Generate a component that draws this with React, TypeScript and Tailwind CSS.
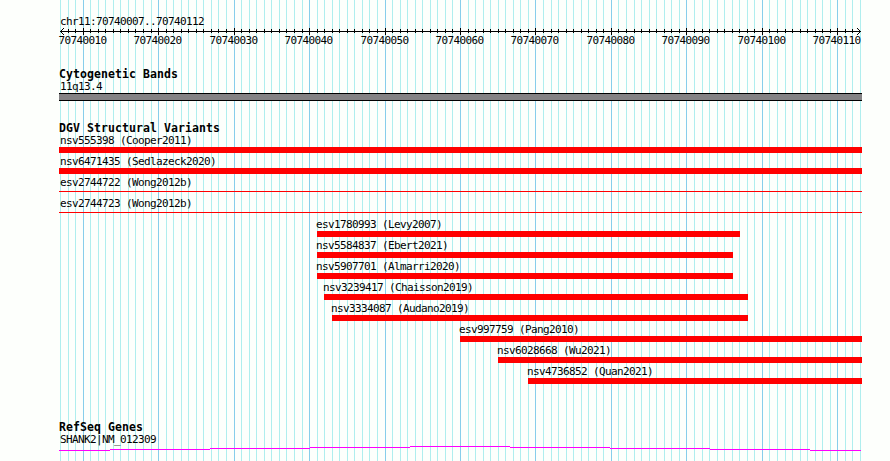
const START = 7;
const END = 113;
const ORIGIN = 60;
const SCALE = 800 / (END - START);

const toX = (pos: number) => Math.round(ORIGIN + (pos - START) * SCALE);

const positions = Array.from({ length: END - START + 1 }, (_, i) => START + i);

const variants = [
  { label: "nsv555398 (Cooper2011)", left: 59, right: 862, thin: false },
  { label: "nsv6471435 (Sedlazeck2020)", left: 59, right: 862, thin: false },
  { label: "esv2744722 (Wong2012b)", left: 59, right: 862, thin: true },
  { label: "esv2744723 (Wong2012b)", left: 59, right: 862, thin: true },
  { label: "esv1780993 (Levy2007)", left: 317, right: 740, thin: false },
  { label: "nsv5584837 (Ebert2021)", left: 317, right: 733, thin: false },
  { label: "nsv5907701 (Almarri2020)", left: 317, right: 733, thin: false },
  { label: "nsv3239417 (Chaisson2019)", left: 324, right: 748, thin: false },
  { label: "nsv3334087 (Audano2019)", left: 332, right: 748, thin: false },
  { label: "esv997759 (Pang2010)", left: 460, right: 862, thin: false },
  { label: "nsv6028668 (Wu2021)", left: 498, right: 862, thin: false },
  { label: "nsv4736852 (Quan2021)", left: 528, right: 862, thin: false },
];

// left edge, right edge, height of each step of the gene line
const geneSteps = [
  [59, 110, 4],
  [110, 210, 3],
  [210, 310, 2],
  [310, 410, 1],
  [410, 510, 0],
  [510, 610, 1],
  [610, 710, 2],
  [710, 810, 3],
  [810, 861, 4],
];

function Grid() {
  return (
    <svg className="absolute inset-0 -z-10" width="890" height="461" shapeRendering="crispEdges">
      {positions.map((p) => (
        <rect
          key={p}
          x={toX(p)}
          y={0}
          width={1}
          height={461}
          fill={p % 10 === 0 ? "#87ceeb" : "#afeeee"}
        />
      ))}
    </svg>
  );
}

function Ruler() {
  return (
    <svg className="block" width="890" height="22">
      <g shapeRendering="crispEdges">
        <rect x={60} y={4} width={801} height={1} />
        {positions.slice(1, -1).map((p) => {
          const major = p % 10 === 0;
          return (
            <rect key={p} x={toX(p)} y={major ? 1 : 2} width={1} height={major ? 7 : 4} />
          );
        })}
        {[1, 2, 3].map((d) => (
          <g key={d}>
            <rect x={60 + d} y={4 - d} width={1} height={1} />
            <rect x={60 + d} y={4 + d} width={1} height={1} />
            <rect x={860 - d} y={4 - d} width={1} height={1} />
            <rect x={860 - d} y={4 + d} width={1} height={1} />
          </g>
        ))}
      </g>
      {positions
        .filter((p) => p % 10 === 0)
        .map((p) => (
          <text key={p} x={toX(p) - 24.5} y={17}>
            {70740000 + p}
          </text>
        ))}
    </svg>
  );
}

function Heading({ children }: { children: string }) {
  return (
    <h2 className="ml-[59px] h-3 text-[11.5px] leading-3 font-bold tracking-[0.077px]">
      {children}
    </h2>
  );
}

export default function App() {
  return (
    <main className="relative isolate h-[461px] w-[890px] overflow-hidden bg-[#fdfffc] pt-4 font-['DejaVu_Sans_Mono',monospace] text-[11px] leading-3 tracking-[-0.622px] whitespace-nowrap text-black">
      <Grid />
      <div className="ml-[60px] h-[11px]">chr11:70740007..70740112</div>
      <Ruler />

      <section className="mt-[19px]">
        <Heading>Cytogenetic Bands</Heading>
        <div className="ml-[60px] h-[13px] pt-px">11q13.4</div>
        <div className="ml-[59px] h-2 w-[803px] border-y border-black bg-[#848284]" />
      </section>

      <section className="mt-[21px]">
        <Heading>DGV Structural Variants</Heading>
        {variants.map((v) => (
          <div
            key={v.label}
            className="h-[21px]"
            style={{ marginLeft: v.left, width: v.right - v.left }}
          >
            <div className={v.left === 59 ? "ml-px h-[13px] pt-px" : "-ml-px h-[13px] pt-px"}>
              {v.label}
            </div>
            <div className={v.thin ? "mt-0.5 h-px bg-[#ff0000]" : "h-1.5 bg-[#ff0000]"} />
          </div>
        ))}
      </section>

      <section className="mt-[35px]">
        <Heading>RefSeq Genes</Heading>
        <div className="ml-[60px] h-[13px] pt-px">SHANK2|NM_012309</div>
        <svg className="block" width="890" height="5" shapeRendering="crispEdges">
          {geneSteps.map(([x1, x2, y]) => (
            <rect key={x1} x={x1} y={y} width={x2 - x1} height={1} fill="#ff00ff" />
          ))}
        </svg>
      </section>
    </main>
  );
}
